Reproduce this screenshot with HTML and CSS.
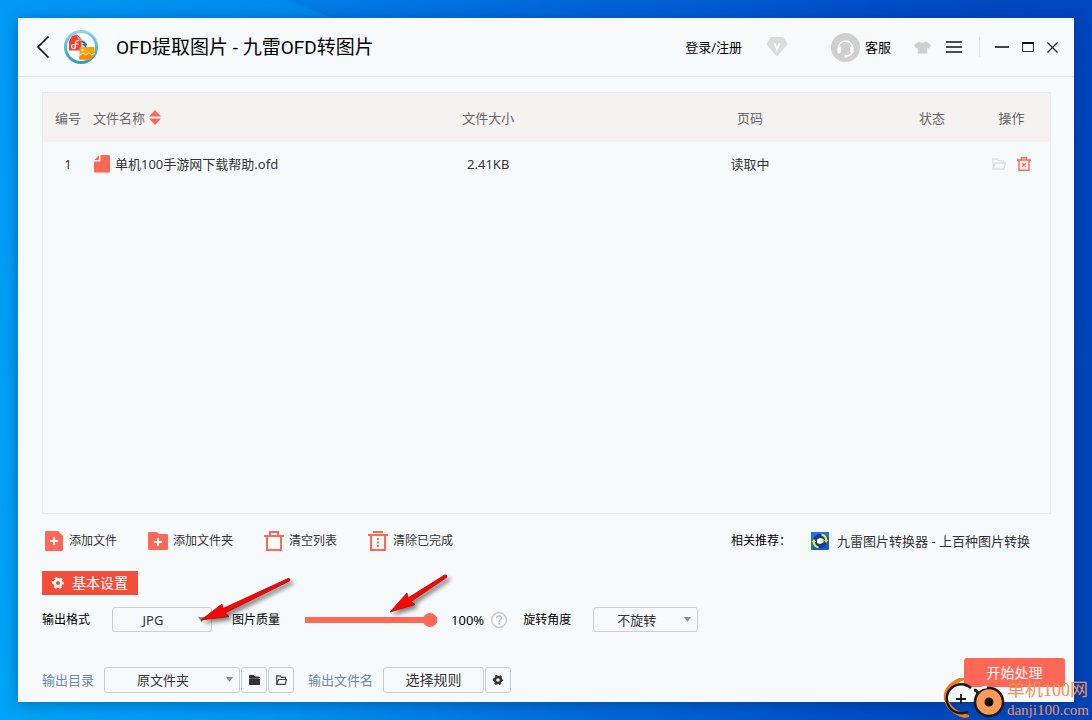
FILE: index.html
```html
<!DOCTYPE html>
<html lang="zh-CN">
<head>
<meta charset="utf-8">
<title>OFD提取图片 - 九雷OFD转图片</title>
<link rel="stylesheet" href="styles.css">
</head>
<body>
<div class="window">
  <header class="titlebar">
    <button class="plain back" aria-label="返回"><svg width="14" height="24" viewBox="0 0 14 24"><path d="M12.500 1.500 2 12 12.500 22.500" fill="none" stroke="#111" stroke-width="1.700"/></svg></button>
    <svg class="logo" width="34" height="34" viewBox="0 0 34 34">
      <defs><linearGradient id="ring" x1="0" y1="0" x2="0" y2="1"><stop offset="0" stop-color="#86d6ee"/><stop offset="1" stop-color="#2f9cc4"/></linearGradient></defs>
      <circle cx="17" cy="17" r="15.500" fill="#fff" stroke="url(#ring)" stroke-width="3"/>
      <path d="M5 20.500V11l3-5 5-1.500L17.500 9v11.500z" fill="#ee4230"/>
      <path d="M12.500 5 17.500 9v3l-3-2z" fill="#f98a80"/>
      <circle cx="9.500" cy="16.500" r="2" fill="none" stroke="#fff" stroke-width="1.200"/><path d="M11.500 17v-4q0-2.500 3.500-2.500M11.500 14h3" fill="none" stroke="#fff" stroke-width="1.200"/>
      <path d="M17.500 11.500c3 0 3.500 1.500 3.500 4" fill="none" stroke="#1377a5" stroke-width="2"/><path d="m18 14 5.500-.5-2 4z" fill="#1377a5"/>
      <path d="M15.500 17h15v8l-4 4.500h-11z" fill="#f7a600"/>
      <path d="m15.500 26 4-3 3 1.500 3-2 5 1.500v1l-4 4.500h-11z" fill="#f58b00"/>
      <circle cx="18.500" cy="20" r="1.200" fill="#fff"/><path d="m15.500 25.500 3.500-2.500 3 2 3-2.500 2.500 2.500 3-1.500" fill="none" stroke="#fff" stroke-width=".9"/>
    </svg>
    <h1 class="title">OFD提取图片 - 九雷OFD转图片</h1>
    <div class="account">
      <a class="link" href="#">登录/注册</a>
      <button class="plain" aria-label="会员"><svg width="22" height="20" viewBox="0 0 22 20"><path d="M6 0h10q1 0 1.600.8L21.200 6q.6 1-.2 1.900L12 18.500q-1 1-2 0L1 7.900Q.2 7 .8 6L4.400.8Q5 0 6 0z" fill="#dbdddd"/><path d="m8.500 6.500 2.500 5.500 2.500-5.500" fill="none" stroke="#fff" stroke-width="1.800"/></svg></button>
    </div>
    <button class="plain service"><svg width="29" height="29" viewBox="0 0 29 29"><circle cx="14.500" cy="14.500" r="14.500" fill="#cfcfcf"/><path d="M7.500 15a7 7 0 0 1 14 0" fill="none" stroke="#fff" stroke-width="1.600"/><rect x="6.500" y="13.500" width="3.500" height="7" rx="1.700" fill="#fff"/><rect x="19" y="13.500" width="3.500" height="7" rx="1.700" fill="#fff"/><path d="M21.500 18.500q-1 4-6 4.500" fill="none" stroke="#fff" stroke-width="1.200"/><circle cx="15" cy="23" r="1.600" fill="#fff"/></svg>客服</button>
    <div class="tools">
      <button class="plain" aria-label="换肤"><svg width="17" height="13" viewBox="0 0 17 13"><path d="M5 .5Q8.500 3 12 .5L17 4l-2 3.500-1.700-.8V12.500H3.700V6.700L2 7.500 0 4z" fill="#cfcfcf"/></svg></button>
      <button class="plain" aria-label="菜单"><svg width="16" height="12" viewBox="0 0 16 12"><path d="M0 1h16M0 6h16M0 11h16" stroke="#111" stroke-width="1.600"/></svg></button>
    </div>
    <div class="controls">
      <button class="plain" aria-label="最小化"><svg width="14" height="12" viewBox="0 0 14 12"><path d="M0 6h14" stroke="#444" stroke-width="2"/></svg></button>
      <button class="plain" aria-label="最大化"><svg width="12" height="10" viewBox="0 0 12 10"><path d="M.5 1v8.500h11V1" fill="none" stroke="#333" stroke-width="1"/><path d="M0 1h12" stroke="#111" stroke-width="2"/></svg></button>
      <button class="plain" aria-label="关闭"><svg width="11" height="11" viewBox="0 0 11 11"><path d="m.5.5 10 10m0-10-10 10" stroke="#222" stroke-width="1.200"/></svg></button>
    </div>
  </header>

  <main class="content">
    <section class="filebox">
      <table class="files">
        <colgroup><col class="c-no"><col><col class="c-size"><col class="c-page"><col class="c-state"><col class="c-ops"></colgroup>
        <thead><tr><th>编号</th><th class="name"><span class="cell">文件名称<svg width="12" height="15" viewBox="0 0 12 15"><path d="M6 0l6 6.500H0zM0 8.500h12L6 15z" fill="#ff6757"/></svg></span></th><th>文件大小</th><th>页码</th><th>状态</th><th>操作</th></tr></thead>
        <tbody><tr><td>1</td><td class="name"><span class="cell file"><svg width="16" height="18" viewBox="0 0 16 18"><path d="M6.500 0H15q1 0 1 1v15.500q0 1-1 1H1q-1 0-1-1V6.500h5.500q1 0 1-1zM5 .3V4q0 1-1 1H.3z" fill="#ff6757"/></svg>单机100手游网下载帮助.ofd</span></td><td>2.41KB</td><td>读取中</td><td></td>
          <td><span class="cell ops">
            <button class="plain" aria-label="打开文件夹"><svg width="14" height="12" viewBox="0 0 14 12"><path d="M1 11V1h4l1.500 1.800H12V5M1 11l2.200-6H13.300l-1.500 6z" fill="none" stroke="#dcdede" stroke-width="1.300"/></svg></button>
            <button class="plain" aria-label="删除"><svg width="14" height="14" viewBox="0 0 14 14"><path d="M0 3h14M4.500 3V.8h5V3M2 3v10.200h10V3M5.200 6.200l3.600 3.600m0-3.600L5.200 9.800" fill="none" stroke="#ff6757" stroke-width="1.500"/></svg></button>
          </span></td></tr></tbody>
      </table>
    </section>

    <div class="toolbar">
      <button class="plain act"><svg width="20" height="20" viewBox="0 0 20 20"><path d="M2 0h12l5 5v14q0 1-1 1H2q-1 0-1-1V1q0-1 1-1z" fill="#ff6757"/><path d="M10 6v8M6 10h8" stroke="#fff" stroke-width="2"/></svg>添加文件</button>
      <button class="plain act"><svg width="20" height="20" viewBox="0 0 20 20"><path d="M1 1h8l2 2h8q1 0 1 1v14q0 1-1 1H1q-1 0-1-1V2q0-1 1-1z" fill="#ff6757"/><path d="M10 7v8M6 11h8" stroke="#fff" stroke-width="2"/></svg>添加文件夹</button>
      <button class="plain act"><svg width="20" height="20" viewBox="0 0 20 20"><path d="M0 5h20M6 5V1h8v4M3 5v14h14V5" fill="none" stroke="#ff6757" stroke-width="2"/></svg>清空列表</button>
      <button class="plain act"><svg width="20" height="20" viewBox="0 0 20 20"><path d="M5 1h10M0 4h20M3 4v15h14V4" fill="none" stroke="#ff6757" stroke-width="2"/><path d="M10 7v9" stroke="#ff6757" stroke-width="2" stroke-dasharray="2 1.500"/></svg>清除已完成</button>
      <div class="recommend"><span class="hint">相关推荐：</span>
        <a class="product" href="#"><svg width="18" height="18" viewBox="0 0 18 18"><rect width="18" height="18" rx="1.500" fill="#1459c8"/><path d="M0 0h18v5L9 3 2 10v8H0z" fill="#2372e8"/><circle cx="9" cy="9" r="7" fill="#103d91"/><path d="M10.500 2.500q4.500 1 5 6.500M7.500 15.500Q3 14.500 2.500 9" fill="none" stroke="#f8ea10" stroke-width="2.300"/><path d="m17.500 8-2.500 3-2-3zM.5 10 3 7l2 3z" fill="#f8ea10"/><path d="M6 7.500 9 6l3.500 1v3.500L9 12l-3-1z" fill="#fff"/><path d="M9 9h3" stroke="#e9b11c"/></svg>九雷图片转换器 - 上百种图片转换</a></div>
    </div>

    <h2 class="tag"><svg width="12" height="12" viewBox="0 0 12 12"><circle cx="6" cy="6" r="3.400" fill="none" stroke="#fff" stroke-width="2.600"/><circle cx="6" cy="6" r="5.200" fill="none" stroke="#fff" stroke-width="1.600" stroke-dasharray="2.700 2.745" stroke-dashoffset="1.350"/></svg>基本设置</h2>

    <div class="settings">
      <div class="field"><label for="format">输出格式</label>
        <span class="pick w-format"><select id="format"><option>JPG</option></select><svg class="caret" width="7" height="5" viewBox="0 0 7 5"><path d="M0 0h7L3.500 5z" fill="#8b8b8b"/></svg></span></div>
      <div class="field quality"><label for="quality">图片质量</label><input class="slider" id="quality" type="range" min="0" max="100" value="100"><output class="percent" for="quality">100%</output>
        <button class="plain" aria-label="帮助"><svg width="16" height="16" viewBox="0 0 16 16"><circle cx="8" cy="8" r="7.400" fill="none" stroke="#bfc1c1" stroke-width="1.200"/><path d="M5.700 6.200C5.700 3 10.300 3 10.300 6 10.300 7.800 8 7.600 8 9.800" fill="none" stroke="#b5b7b7" stroke-width="1.300"/><circle cx="8" cy="11.800" r=".9" fill="#b5b7b7"/></svg></button></div>
      <div class="field"><label for="rotate">旋转角度</label>
        <span class="pick w-rotate"><select id="rotate"><option>不旋转</option></select><svg class="caret" width="7" height="5" viewBox="0 0 7 5"><path d="M0 0h7L3.500 5z" fill="#8b8b8b"/></svg></span></div>
      <svg class="arrows" width="270" height="70" viewBox="0 0 270 70"><g fill="#fb0505" stroke="#a40808" stroke-width=".8" stroke-linejoin="round"><path d="M9 50 30 34l1 4.500L96 8.500q3 0 1.500 2.500L33 43l4 3.500z"/><path d="M198 42 215 23l1 5L252.500 5q3.500-.5 2 2.500L219 31.500l4 3z"/></g></svg>
    </div>
  </main>

  <footer class="footer">
    <div class="output">
      <label for="folder">输出目录</label>
      <span class="pick w-folder"><select id="folder"><option>原文件夹</option></select><svg class="caret" width="7" height="5" viewBox="0 0 7 5"><path d="M0 0h7L3.500 5z" fill="#8b8b8b"/></svg></span>
      <button class="square" aria-label="选择文件夹"><svg width="11" height="10" viewBox="0 0 11 10"><path d="M.5.500h4L6 2h4.500v1H.5zM.5 4h10v5.500H.5z" fill="#333" stroke="#333"/></svg></button>
      <button class="square" aria-label="打开文件夹"><svg width="11" height="10" viewBox="0 0 11 10"><path d="M.7 9.300V.8h3.500l1.300 1.500h4v2M.7 9.300l1.800-4.800h8l-1.300 4.800z" fill="none" stroke="#444" stroke-width="1.200"/></svg></button>
      <span class="rule-label">输出文件名</span>
      <button class="rule">选择规则</button>
      <button class="square" aria-label="规则设置"><svg width="12" height="12" viewBox="0 0 12 12"><circle cx="6" cy="6" r="3" fill="none" stroke="#333" stroke-width="2.400"/><circle cx="6" cy="6" r="4.600" fill="none" stroke="#333" stroke-width="1.300" stroke-dasharray="2.400 2.417" stroke-dashoffset="1.200"/></svg></button>
    </div>
    <button class="start">开始处理</button>
  </footer>
</div>

<div class="watermark">
  <svg width="64" height="44" viewBox="0 0 64 44"><path d="M21 2 16 2Q-1 10 1 23q2 13 20 19l5-1v-2Q7 34 4.500 21 4 11 21 4z" fill="#f57c10"/><path d="M25 35.500A14.500 14.500 0 1 1 28 12" fill="none" stroke="#1c1718" stroke-width="2.400"/><path d="M18 18v10M13 23h10" stroke="#1c1718" stroke-width="1.800"/><path d="M31 14q4 0 4 5M36 18q1-3 4-4" fill="none" stroke="#1c1718" stroke-width="2.800"/><circle cx="46" cy="26" r="14" fill="#fb9a5a" stroke="#1c1718" stroke-width="2.600"/><path d="M35 14.500q4-3.500 9-3.500" fill="none" stroke="#f7fafb" stroke-width="2.600"/><circle cx="46" cy="26" r="4.500" fill="#15100f"/></svg>
  <div class="brand"><span class="brand-name">单机100网</span><span class="brand-url">danji100.com</span></div>
</div>
</body>
</html>
```
FILE: styles.css
```css
* { box-sizing: border-box; }

body {
  position: relative;
  display: flex;
  min-height: 100vh;
  margin: 0;
  padding: 18px;
  overflow-x: hidden;
  background:
    linear-gradient(22deg, transparent 72%, rgba(0, 60, 190, .15) 72%, transparent 90%),
    linear-gradient(180deg, rgba(0, 110, 235, .2), rgba(0, 170, 250, .08)),
    linear-gradient(90deg, #00a4f8 0%, #0092f0 25%, #0064d6 55%, #0045c0 80%, #003cb2 100%);
  color: #333;
  font: 13px/20px "Noto Sans", "Noto Sans CJK SC", sans-serif;
}

svg { display: block; flex: none; }
button, select { font: inherit; color: inherit; }
a { color: inherit; text-decoration: none; }

.plain {
  display: flex;
  align-items: center;
  padding: 0;
  border: 0;
  background: none;
}

.window {
  display: flex;
  flex: 1;
  flex-direction: column;
  min-width: 0;
  background: #f7fafb;
  box-shadow: 0 2px 14px rgba(0, 20, 60, .35);
}

.titlebar {
  display: flex;
  align-items: center;
  height: 59px;
  padding: 0 16px 0 18px;
  border-bottom: 1px solid #e2e5e7;
  color: #000;
}
.logo { margin: 0 18px 0 14px; }
.title {
  margin: 0 auto 0 0;
  padding-top: 2px;
  font: 400 19px/28px Roboto, "Noto Sans CJK SC", sans-serif;
}
.account { display: flex; align-items: center; gap: 24px; }
.service { gap: 5px; margin-left: 43px; }
.tools { display: flex; align-items: center; gap: 15px; margin-left: 23px; }
.controls {
  display: flex;
  align-items: center;
  gap: 13px;
  height: 20px;
  margin-left: 17px;
  padding-left: 15px;
  border-left: 1px solid #dfe1e3;
}

.content {
  display: flex;
  flex: 1;
  flex-direction: column;
  padding: 15px 23px 0 24px;
}

.filebox { flex: 1; border: 1px solid #e8eaec; }
.files { width: 100%; border-collapse: collapse; table-layout: fixed; }
.files th, .files td { padding: 0; text-align: center; font-weight: 400; }
.files th { height: 49px; background: #f5f3f2; color: #666; }
.files td { height: 44px; }
.files .name { text-align: left; }
.c-no { width: 50px; }
.c-size { width: 24%; }
.c-page { width: 28%; }
.c-state { width: 82px; }
.c-ops { width: 77px; }
.cell { display: flex; align-items: center; gap: 4px; }
.file { gap: 5px; padding-left: 1px; }
.ops { justify-content: center; gap: 11px; }

.toolbar {
  display: flex;
  align-items: center;
  gap: 31px;
  margin-top: 17px;
  padding: 0 21px 0 2px;
}
.act { gap: 5px; font-size: 12px; }
.recommend { display: flex; align-items: center; gap: 20px; margin-left: auto; }
.hint { color: #000; font-size: 12px; }
.product { display: flex; align-items: center; gap: 8px; }

.tag {
  display: flex;
  align-items: center;
  align-self: flex-start;
  gap: 8px;
  height: 24px;
  margin: 20px 0 0;
  padding: 0 10px;
  background: #f44d3a;
  color: #fff;
  font-size: 14px;
  font-weight: 400;
}

.settings {
  position: relative;
  display: flex;
  align-items: center;
  gap: 20px;
  margin-top: 12px;
  color: #000;
}
.field { display: flex; align-items: center; gap: 22px; }
.field label { font-size: 12px; }
.quality { gap: 7px; margin-right: -4px; }
.slider {
  width: 132px;
  height: 14px;
  margin: 0 7px 0 18px;
  appearance: none;
  background: linear-gradient(#ff6757, #ff6757) center / 100% 6px no-repeat;
  border-radius: 3px;
}
.slider::-webkit-slider-thumb {
  width: 14px;
  height: 14px;
  appearance: none;
  border-radius: 50%;
  background: #ff6757;
}
.arrows {
  position: absolute;
  left: 150px;
  top: -37px;
  pointer-events: none;
  filter: drop-shadow(3px 3px 2px rgba(0, 0, 0, .5));
}

.pick { position: relative; display: block; height: 26px; }
.settings .pick { height: 25px; }
.pick select {
  width: 100%;
  height: 100%;
  padding: 0 18px 0 0;
  appearance: none;
  border: 1px solid #cdd0d2;
  border-radius: 3px;
  background: none;
  color: #333;
  text-align: center;
  text-align-last: center;
}
.caret { position: absolute; right: 7px; top: 10px; pointer-events: none; }
.w-format { width: 100px; }
.w-rotate { width: 105px; }
.w-folder { width: 136px; margin-left: 9px; }

.footer {
  display: flex;
  align-items: flex-start;
  justify-content: space-between;
  padding: 26px 9px 9px 24px;
}
.output { display: flex; align-items: center; gap: 1px; padding-top: 9px; }
.output label, .rule-label { color: #6d88a8; }
.rule-label { margin: 0 9px 0 13px; }
.square, .rule {
  display: flex;
  align-items: center;
  justify-content: center;
  width: 26px;
  height: 26px;
  padding: 0;
  border: 1px solid #cdd0d2;
  border-radius: 3px;
  background: none;
}
.rule { width: 101px; font-size: 14px; }
.start {
  width: 101px;
  height: 29px;
  padding: 0;
  border: 0;
  border-radius: 3px;
  background: #ff6757;
  color: #fff;
  font-size: 14px;
}

.watermark {
  position: absolute;
  right: 3px;
  bottom: 0;
  display: flex;
  align-items: flex-end;
  color: #f09258;
  pointer-events: none;
}
.brand { display: flex; flex-direction: column; }
.brand-name { font: 18px/20px "Liberation Serif", "Noto Sans CJK SC", sans-serif; }
.brand-url { font: 15px/20px "Liberation Serif", serif; }
```
